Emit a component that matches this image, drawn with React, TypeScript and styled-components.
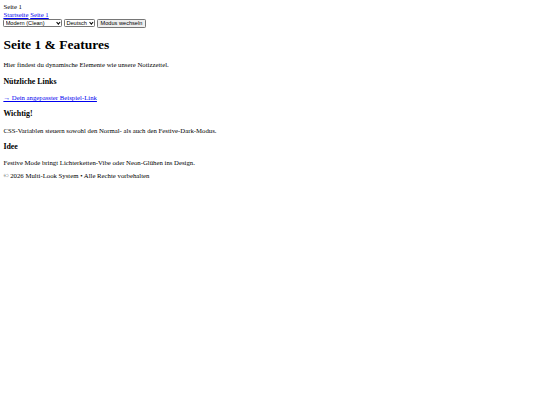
import React from "react";
import styled, { createGlobalStyle } from "styled-components";

// The reference is a 1280x960 page photographed down to 540x405,
// so the page is laid out at full size and drawn at that ratio.
const GlobalStyle = createGlobalStyle`
  html, body {
    margin: 0;
    background: #ffffff;
  }
`;

const Page = styled.div`
  zoom: 0.421875;
  padding: 8px;
  font-family: "Liberation Serif", "Times New Roman", serif;
  font-size: 16px;
  line-height: 18px;
  color: #000000;
`;

const SiteTitle = styled.div``;

const Nav = styled.nav``;

const NavLink = styled.a`
  color: #0000ee;
  text-decoration: underline;
`;

const Controls = styled.div`
  height: 23px;
`;

const SelectWrap = styled.span`
  position: relative;
  display: inline-block;
  vertical-align: top;
  margin-top: 1px;

  &::after {
    content: "";
    position: absolute;
    right: 6px;
    top: 5px;
    width: 4px;
    height: 4px;
    border-right: 2px solid #000000;
    border-bottom: 2px solid #000000;
    transform: rotate(45deg);
    pointer-events: none;
  }
`;

const Select = styled.select<{ $width: number }>`
  appearance: none;
  box-sizing: border-box;
  width: ${(p) => p.$width}px;
  height: 20px;
  margin: 0;
  padding: 0 0 0 3px;
  font-family: "Liberation Sans", Arial, sans-serif;
  font-size: 13.33px;
  color: #000000;
  background: #ffffff;
  border: 1px solid #767676;
  border-radius: 3px;
`;

const Button = styled.button`
  box-sizing: border-box;
  height: 23px;
  margin: 0;
  padding: 1px 6px;
  vertical-align: top;
  font-family: "Liberation Sans", Arial, sans-serif;
  font-size: 13.33px;
  color: #000000;
  background: #efefef;
  border: 1px solid #767676;
  border-radius: 3px;
`;

const Main = styled.main`
  display: block;
`;

const Title = styled.h1`
  font-size: 32px;
  line-height: 37px;
  font-weight: bold;
  margin: 20px 0 21.44px;
`;

const Paragraph = styled.p`
  margin: 16px 0;
`;

const SubTitle = styled.h3`
  font-size: 18.72px;
  line-height: 22px;
  font-weight: bold;
  margin: 18.72px 0;
`;

const Footer = styled.footer`
  display: block;
  margin-top: -4px;
`;

export default function App() {
  return (
    <>
      <GlobalStyle />
      <Page>
        <SiteTitle>Seite 1</SiteTitle>
        <Nav>
          <NavLink href="#">Startseite</NavLink> <NavLink href="#">Seite 1</NavLink>
        </Nav>
        <Controls>
          <SelectWrap>
            <Select $width={140} defaultValue="modern">
              <option value="modern">Modern (Clean)</option>
              <option value="festive">Festive (Dark)</option>
            </Select>
          </SelectWrap>{" "}
          <SelectWrap>
            <Select $width={74} defaultValue="de">
              <option value="de">Deutsch</option>
              <option value="en">English</option>
            </Select>
          </SelectWrap>{" "}
          <Button type="button">Modus wechseln</Button>
        </Controls>
        <Main>
          <Title>Seite 1 &amp; Features</Title>
          <Paragraph>Hier findest du dynamische Elemente wie unsere Notizzettel.</Paragraph>
          <SubTitle>Nützliche Links</SubTitle>
          <Paragraph>
            <NavLink href="#">→ Dein angepasster Beispiel-Link</NavLink>
          </Paragraph>
          <SubTitle>Wichtig!</SubTitle>
          <Paragraph>CSS-Variablen steuern sowohl den Normal- als auch den Festive-Dark-Modus.</Paragraph>
          <SubTitle>Idee</SubTitle>
          <Paragraph>Festive Mode bringt Lichterketten-Vibe oder Neon-Glühen ins Design.</Paragraph>
        </Main>
        <Footer>© 2026 Multi-Look System • Alle Rechte vorbehalten</Footer>
      </Page>
    </>
  );
}
